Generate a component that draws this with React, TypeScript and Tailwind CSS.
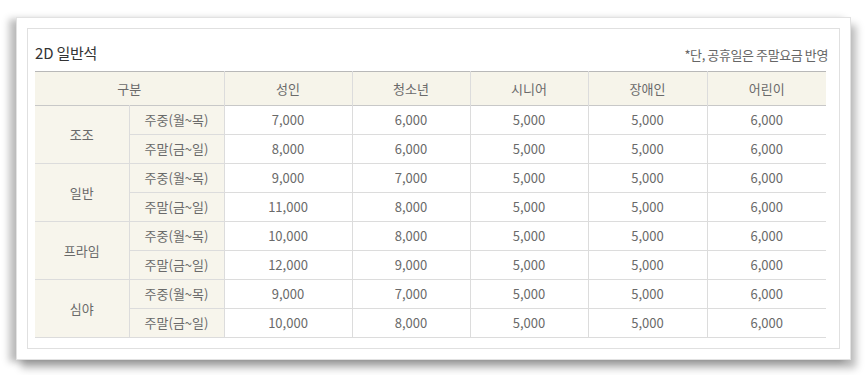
import React from 'react';

const COLS = ['성인', '청소년', '시니어', '장애인', '어린이'];

const GROUPS = [
  { name: '조조', rows: [['7,000', '6,000', '5,000', '5,000', '6,000'], ['8,000', '6,000', '5,000', '5,000', '6,000']] },
  { name: '일반', rows: [['9,000', '7,000', '5,000', '5,000', '6,000'], ['11,000', '8,000', '5,000', '5,000', '6,000']] },
  { name: '프라임', rows: [['10,000', '8,000', '5,000', '5,000', '6,000'], ['12,000', '9,000', '5,000', '5,000', '6,000']] },
  { name: '심야', rows: [['9,000', '7,000', '5,000', '5,000', '6,000'], ['10,000', '8,000', '5,000', '5,000', '6,000']] },
];

const DAYS = ['주중(월~목)', '주말(금~일)'];

export default function App() {
  return (
    <div
      className="w-[866px] h-[375px] bg-white pt-[17px] pl-[16px]"
      style={{ fontFamily: '"Noto Sans CJK KR", "Noto Sans", sans-serif' }}
    >
      {/* paper card */}
      <div className="w-[835px] h-[343px] bg-white border border-[#e2e2e2] p-[10px] shadow-[-7px_2px_7px_rgba(0,0,0,0.25),5px_8px_8px_rgba(0,0,0,0.28)]">
        <div className="h-[321px] border border-[#e0e0e0] pl-[7px] pr-[11px]">
          <div className="h-[42px] flex items-end justify-between pb-[8px]">
            <h2 className="text-[15px] leading-[20px] text-[#333] tracking-[-0.2px]">2D 일반석</h2>
            <span className="text-[13px] leading-[16px] text-[#666] tracking-[-0.4px]">*단, 공휴일은 주말요금 반영</span>
          </div>

          <table className="w-[791px] border-collapse table-fixed text-[13px] text-[#6a6a6a]">
            <colgroup>
              <col className="w-[94px]" />
              <col className="w-[95px]" />
              <col className="w-[128px]" />
              <col className="w-[118px]" />
              <col className="w-[118px]" />
              <col className="w-[119px]" />
              <col className="w-[119px]" />
            </colgroup>
            <thead>
              <tr className="h-[34px] bg-[#f6f4ea] border-t border-t-[#b8b8b8] border-b border-b-[#c8c8c8]">
                <th colSpan={2} className="font-normal border-r border-[#dcdcdc]">구분</th>
                {COLS.map((c, i) => (
                  <th key={c} className={`font-normal ${i < COLS.length - 1 ? 'border-r border-[#dcdcdc]' : ''}`}>
                    {c}
                  </th>
                ))}
              </tr>
            </thead>
            <tbody>
              {GROUPS.map((g) =>
                g.rows.map((row, ri) => (
                  <tr key={g.name + ri} className="h-[29px] border-b border-[#dcdcdc]">
                    {ri === 0 && (
                      <td rowSpan={2} className="text-center bg-[#f7f5ec] border-r border-[#dcdcdc]">
                        {g.name}
                      </td>
                    )}
                    <td className="text-center bg-[#f7f5ec] border-r border-[#dcdcdc]">{DAYS[ri]}</td>
                    {row.map((v, vi) => (
                      <td
                        key={vi}
                        className={`text-center ${vi < row.length - 1 ? 'border-r border-[#dcdcdc]' : ''}`}
                      >
                        {v}
                      </td>
                    ))}
                  </tr>
                ))
              )}
            </tbody>
          </table>
        </div>
      </div>
    </div>
  );
}
